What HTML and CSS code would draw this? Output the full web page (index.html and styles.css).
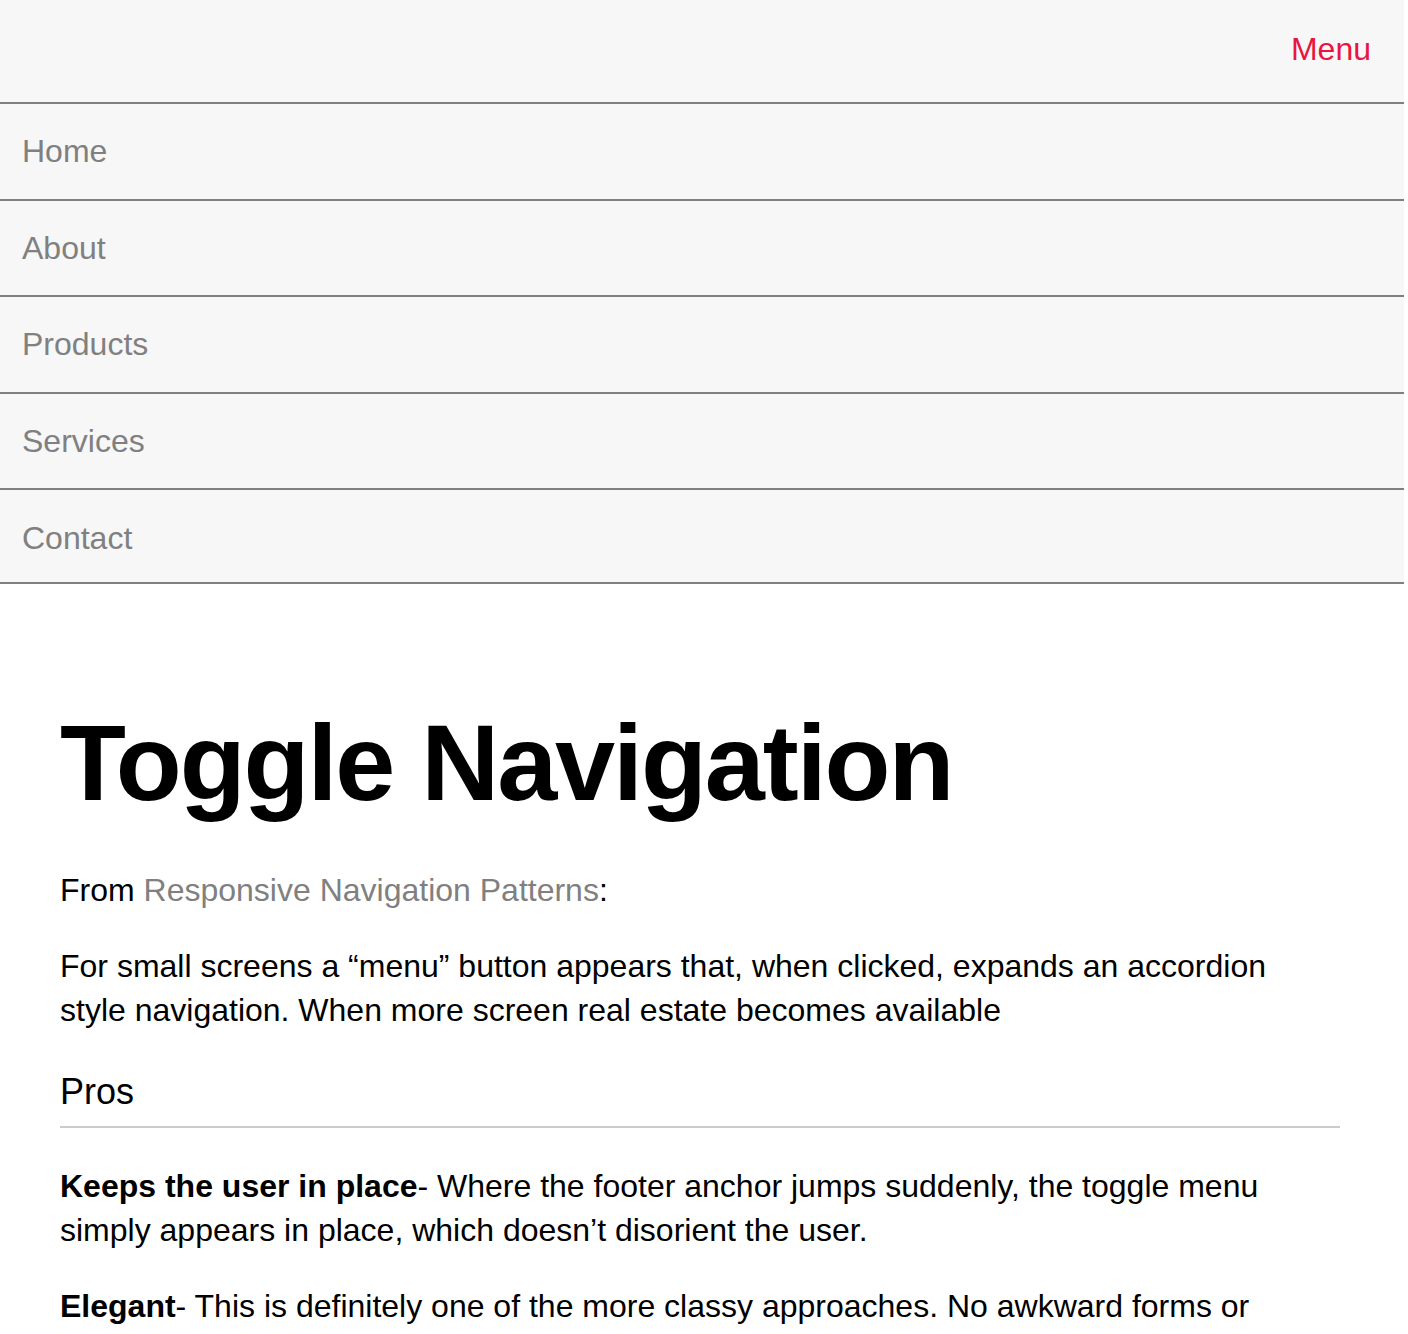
FILE: index.html
```html
<!DOCTYPE html>
<html lang="en">
<head>
<meta charset="utf-8">
<title>Toggle Navigation</title>
<link rel="stylesheet" href="styles.css">
</head>
<body>
<header class="site-header">
  <div class="menu-bar">
    <a class="menu-toggle" href="#">Menu</a>
  </div>
  <nav class="main-nav">
    <ul class="nav-list">
      <li class="nav-item"><a class="nav-link" href="#">Home</a></li>
      <li class="nav-item"><a class="nav-link" href="#">About</a></li>
      <li class="nav-item"><a class="nav-link" href="#">Products</a></li>
      <li class="nav-item"><a class="nav-link" href="#">Services</a></li>
      <li class="nav-item"><a class="nav-link" href="#">Contact</a></li>
    </ul>
  </nav>
</header>
<main class="content">
  <h1 class="title">Toggle Navigation</h1>
  <p class="para">From <a class="text-link" href="#">Responsive Navigation Patterns</a>:</p>
  <p class="para">For small screens a “menu” button appears that, when clicked, expands an accordion style navigation. When more screen real estate becomes available</p>
  <h2 class="section-title">Pros</h2>
  <p class="para"><strong>Keeps the user in place</strong>- Where the footer anchor jumps suddenly, the toggle menu simply appears in place, which doesn’t disorient the user.</p>
  <p class="para"><strong>Elegant</strong>- This is definitely one of the more classy approaches. No awkward forms or jumping down to footers, just a clean menu that slides into view.</p>
</main>
</body>
</html>
```

FILE: styles.css
```css
html, body {
  margin: 0;
  padding: 0;
  background: #ffffff;
}

body {
  font-family: "Liberation Sans", Arial, Helvetica, sans-serif;
  font-size: 32px;
  line-height: 44px;
  color: #000000;
}

.site-header {
  margin-right: 4px;
  background: #f7f7f7;
}

.menu-bar {
  height: 102px;
  display: flex;
  align-items: center;
  justify-content: flex-end;
  padding-right: 33px;
  border-bottom: 2px solid #808080;
  box-sizing: content-box;
}

.menu-toggle {
  color: #e8163e;
  text-decoration: none;
  font-size: 32px;
  line-height: 44px;
  padding-bottom: 4px;
}

.nav-list {
  list-style: none;
  margin: 0;
  padding: 0;
}

.nav-item {
  border-bottom: 2px solid #808080;
}

.nav-link {
  display: flex;
  align-items: center;
  height: 94.5px;
  padding-left: 22px;
  color: #808080;
  text-decoration: none;
  font-size: 32px;
}

.nav-item:last-child .nav-link {
  height: 92px;
  padding-top: 4px;
  box-sizing: border-box;
}

.content {
  width: 1280px;
  margin-left: 60px;
  padding-top: 119px;
}

.title {
  margin: 0 0 46px 0;
  font-size: 108px;
  line-height: 119px;
  font-weight: 700;
  letter-spacing: -2.1px;
}

.para {
  margin: 0 0 32px 0;
}

.para strong {
  font-weight: 700;
}

.text-link {
  color: #808080;
  text-decoration: none;
}

.section-title {
  margin: 38px 0 36px 0;
  padding-bottom: 12px;
  font-size: 36px;
  line-height: 44px;
  font-weight: 400;
  border-bottom: 2px solid #cccccc;
}
```
